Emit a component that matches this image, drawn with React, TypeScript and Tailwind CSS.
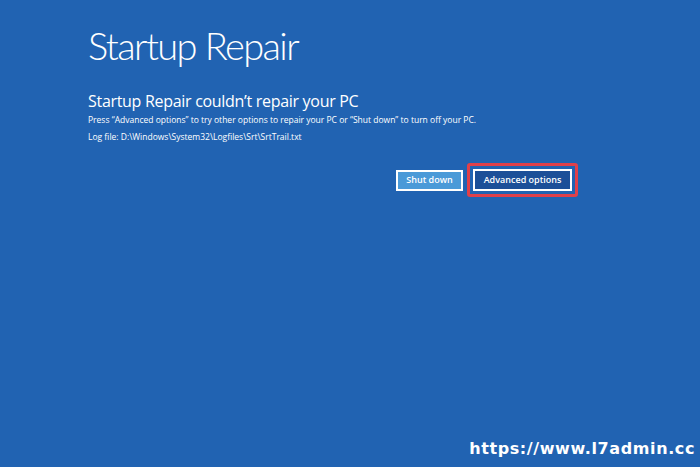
export default function App() {
  return (
    <div
      className="relative h-[467px] w-[700px] overflow-hidden bg-[#2163b2] text-white"
      style={{ fontFamily: '"Open Sans", "Noto Sans", sans-serif' }}
    >
      <div className="pl-[88px] pt-[19px]">
        <h1
          className="text-[38px] font-light leading-[52px] tracking-[-1.6px]"
          style={{ fontFamily: 'Lato, "Open Sans", sans-serif' }}
        >
          Startup Repair
        </h1>
        <h2 className="mt-[19px] text-[16px] font-normal leading-[22px] tracking-[-0.3px]">
          Startup Repair couldn’t repair your PC
        </h2>
        <p className="mt-[1px] text-[8.5px] leading-[14px]">
          Press “Advanced options” to try other options to repair your PC or “Shut down” to turn off
          your PC.
        </p>
        <p className="mt-[3px] text-[8.5px] leading-[14px]">
          Log file: D:\Windows\System32\Logfiles\Srt\SrtTrail.txt
        </p>
      </div>

      <div className="mt-[19px] flex items-center justify-end gap-[4px] pr-[122px]">
        <button className="h-[21px] w-[67px] border-2 border-white bg-[#4a9ad8] text-[9px] font-semibold text-white">
          Shut down
        </button>
        <div className="rounded-[3px] border-[3px] border-[#e0404a] p-[3px]">
          <button className="block h-[22px] w-[99px] border-2 border-white bg-[#1c4f98] text-[9px] font-semibold text-white">
            Advanced options
          </button>
        </div>
      </div>

      <div
        className="absolute bottom-[6px] right-[5px] text-[16px] font-bold tracking-[0.6px]"
        style={{ fontFamily: '"DejaVu Sans", sans-serif' }}
      >
        https://www.l7admin.cc
      </div>
    </div>
  );
}
